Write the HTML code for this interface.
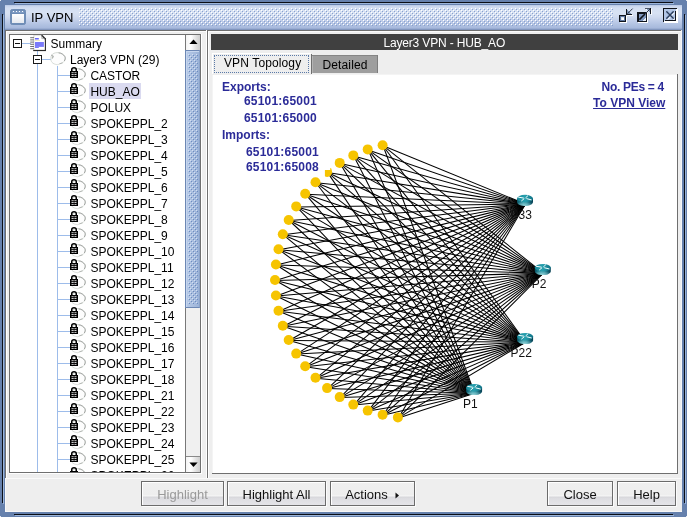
<!DOCTYPE html>
<html><head><meta charset="utf-8"><title>IP VPN</title>
<style>
html,body{margin:0;padding:0;}
body{will-change:transform;width:687px;height:517px;overflow:hidden;position:relative;background:#6681ad;font-family:"Liberation Sans",sans-serif;font-size:12px;}
body div, body svg{position:absolute;box-sizing:content-box;}
.t{white-space:nowrap;font-size:12px;line-height:16px;color:#000;}
.b{font-weight:bold;}
#title{background:linear-gradient(180deg,#b5c5e3 0px,#c7d4ec 1px,#d3def1 3px,#d8e2f3 8px,#cfdaef 12px,#bfcde9 16px,#b0c1e1 20px,#a7b9dc 23px,#8fa3c9 24px,#7489b3 25px);}
#thumb{box-sizing:border-box;border:1px solid #6c87b4;border-right-color:#8ba3c9;background:linear-gradient(90deg,#b6c9e7 0%,#acc1e1 40%,#a3b9dc 75%,#9ab2d7 100%);}
.btn{border:1px solid #6b6b6b;box-shadow:inset 1px 1px 0 #ffffff, 1px 1px 0 #fbfbfb;background:linear-gradient(180deg,#f0f0f0 0%,#eeeeee 55%,#f6f6f6 61%,#d6d6da 65%,#dddde1 72%,#e4e4e8 100%);text-align:center;line-height:25px;font-size:13px;white-space:nowrap;}
.btn span{position:static;}
</style></head>
<body>
<div style="left:0px;top:0px;width:687px;height:517px;background:#6681ad;"></div>
<div style="left:0px;top:0px;width:1px;height:1px;background:#e4e9f2;"></div>
<div style="left:686px;top:0px;width:1px;height:1px;background:#e4e9f2;"></div>
<div style="left:0px;top:516px;width:1px;height:1px;background:#e4e9f2;"></div>
<div style="left:686px;top:516px;width:1px;height:1px;background:#e4e9f2;"></div>
<div style="left:14px;top:2px;width:659px;height:1px;background:#0a0d14;"></div>
<div style="left:2px;top:14px;width:1px;height:489px;background:#0a0d14;"></div>
<div style="left:684px;top:14px;width:1px;height:489px;background:#0a0d14;"></div>
<div style="left:14px;top:514px;width:659px;height:1px;background:#0a0d14;"></div>
<div style="left:15px;top:3px;width:659px;height:1px;background:#9cb5d9;"></div>
<div style="left:3px;top:15px;width:1px;height:489px;background:#9cb5d9;"></div>
<div style="left:685px;top:15px;width:1px;height:489px;background:#9cb5d9;"></div>
<div style="left:15px;top:515px;width:659px;height:1px;background:#9cb5d9;"></div>
<div id="title" style="left:5px;top:5px;width:677px;height:25px;"></div>
<svg style="left:79px;top:8px" width="534" height="18" shape-rendering="crispEdges"><defs><pattern id="bp" width="4" height="4" patternUnits="userSpaceOnUse"><rect x="0" y="0" width="1" height="1" fill="#fff"/><rect x="1" y="1" width="1" height="1" fill="#88a1cf"/><rect x="2" y="2" width="1" height="1" fill="#fff"/><rect x="3" y="3" width="1" height="1" fill="#88a1cf"/></pattern></defs><rect width="534" height="18" fill="url(#bp)"/></svg>
<svg style="left:10px;top:9px" width="16" height="16" viewBox="0 0 16 16">
<defs><linearGradient id="wg" x1="0" y1="0" x2="0" y2="1"><stop offset="0" stop-color="#ffffff"/><stop offset="1" stop-color="#e4e8ef"/></linearGradient></defs>
<rect x="0.5" y="0.5" width="15" height="15" rx="1.8" fill="#6f8db6" stroke="#6f8db6"/>
<rect x="2" y="5" width="12" height="9" fill="url(#wg)"/>
<rect x="2" y="2" width="12" height="2" fill="#7f9cc4"/>
<rect x="3" y="2" width="1" height="1" fill="#fff"/><rect x="6" y="2" width="1" height="1" fill="#fff"/><rect x="9" y="2" width="1" height="1" fill="#fff"/><rect x="12" y="2" width="1" height="1" fill="#fff"/>
</svg>
<div class="t" style="left:31px;top:9px;font-size:13px;line-height:18px;">IP VPN</div>
<svg style="left:618px;top:7px" width="17" height="17" viewBox="0 0 17 17" shape-rendering="crispEdges">
<rect x="2" y="9" width="7" height="7" fill="#fff"/>
<rect x="1" y="8" width="7" height="7" fill="#10141c"/>
<rect x="2" y="9" width="5" height="5" fill="#5d769e"/>
<rect x="3" y="10" width="3" height="3" fill="#dfe6f2"/><rect x="3.5" y="10.5" width="2" height="2" fill="#fff"/>
<rect x="9" y="3" width="1" height="6" fill="#fff"/><rect x="9" y="8" width="6" height="1" fill="#fff"/>
<path d="M8 2 V8 H14 Z" fill="#7c94b8"/>
<rect x="8" y="2" width="1" height="6" fill="#10141c"/><rect x="8" y="7" width="6" height="1" fill="#10141c"/>
<g shape-rendering="auto">
<path d="M14.6 1.6 L9.4 6.8" stroke="#30384a" stroke-width="1" fill="none"/>
</g>
</svg>
<svg style="left:636px;top:7px" width="17" height="17" viewBox="0 0 17 17" shape-rendering="crispEdges">
<rect x="2" y="6" width="10" height="10" fill="#fff"/>
<rect x="1" y="5" width="10" height="10" fill="#10141c"/>
<rect x="3" y="7" width="7" height="7" fill="#7f98c0"/>
<path d="M10 10 V14 H6 Z" fill="#e8eef8"/>
<rect x="10" y="2" width="6" height="1" fill="#fff"/><rect x="15" y="2" width="1" height="6" fill="#fff"/>
<path d="M9 1 H15 V7 Z" fill="#7c94b8"/>
<rect x="9" y="1" width="6" height="1" fill="#4a5568"/><rect x="14" y="1" width="1" height="6" fill="#10141c"/>
<g shape-rendering="auto">
<path d="M3.4 12.6 L9 7" stroke="#10141c" stroke-width="1.6" fill="none"/>
<path d="M9 7 L14 2" stroke="#30384a" stroke-width="1" fill="none"/>
</g>
</svg>
<svg style="left:662px;top:7px" width="17" height="17" viewBox="0 0 17 17" shape-rendering="crispEdges">
<rect x="2" y="2" width="14" height="14" fill="#fff"/>
<rect x="1" y="1" width="14" height="14" fill="#10141c"/>
<rect x="2" y="2" width="12" height="12" fill="#b3c6e5"/>
<rect x="14" y="2" width="1" height="13" fill="#fff"/><rect x="2" y="14" width="13" height="1" fill="#fff"/>
<rect x="13" y="4" width="1" height="10" fill="#10141c"/><rect x="3" y="13" width="11" height="1" fill="#10141c"/>
<g shape-rendering="auto">
<path d="M4.5 4.5 L11.5 11.5 M11.5 4.5 L4.5 11.5" stroke="#fff" stroke-width="1.4" fill="none" transform="translate(0.9,0.9)"/>
<path d="M4.5 4.5 L11.5 11.5 M11.5 4.5 L4.5 11.5" stroke="#5d769e" stroke-width="2" fill="none"/>
<path d="M4.5 4.5 L11.5 11.5 M11.5 4.5 L4.5 11.5" stroke="#10141c" stroke-width="1" fill="none" stroke-dasharray="1.6 1.2"/>
</g>
</svg>
<div style="left:5px;top:30px;width:677px;height:482px;background:#eeeeee;"></div>
<div style="left:5px;top:479px;width:1px;height:33px;background:#f9f9f9;"></div>
<div style="left:5px;top:511px;width:677px;height:1px;background:#f7f7f7;"></div>
<div style="left:5px;top:30px;width:201px;height:1px;background:#6f6f6f;"></div>
<div style="left:206px;top:30px;width:1px;height:448px;background:#ffffff;"></div>
<div style="left:207px;top:30px;width:474px;height:1px;background:#6f6f6f;"></div>
<div style="left:5px;top:30px;width:1px;height:448px;background:#6f6f6f;"></div>
<div style="left:6px;top:31px;width:1px;height:447px;background:#ffffff;"></div>
<div style="left:6px;top:31px;width:200px;height:1px;background:#fbfbfb;"></div>
<div style="left:5px;top:478px;width:677px;height:1px;background:#fafafa;"></div>
<div style="left:681px;top:31px;width:1px;height:448px;background:#f8f8f8;"></div>
<div style="left:207px;top:30px;width:1px;height:448px;background:#6f6f6f;"></div>
<div style="left:208px;top:31px;width:1px;height:447px;background:#ffffff;"></div>
<div style="left:208px;top:31px;width:473px;height:1px;background:#fbfbfb;"></div>
<div style="left:9px;top:34px;width:192px;height:439px;background:#6f6f6f;"></div>
<div style="left:201px;top:34px;width:1px;height:440px;background:#ffffff;"></div>
<div style="left:9px;top:473px;width:193px;height:1px;background:#ffffff;"></div>
<div id="tree" style="left:10px;top:35px;width:175px;height:437px;background:#fff;overflow:hidden;">
<div style="left:27px;top:16px;width:1px;height:4px;background:#9dbcea;"></div>
<div style="left:27px;top:29px;width:1px;height:420px;background:#9dbcea;"></div>
<div style="left:47px;top:31px;width:1px;height:420px;background:#9dbcea;"></div>
<div style="left:12px;top:8px;width:9px;height:1px;background:#9dbcea;"></div>
<div style="left:32px;top:24px;width:9px;height:1px;background:#9dbcea;"></div>
<div style="left:3px;top:4px;width:7px;height:7px;border:1px solid #1a1a1a;background:#fff;"></div><div style="left:5px;top:8px;width:5px;height:1px;background:#111;"></div>
<div style="left:23px;top:20px;width:7px;height:7px;border:1px solid #1a1a1a;background:#fff;"></div><div style="left:25px;top:24px;width:5px;height:1px;background:#111;"></div>
<svg style="left:20px;top:0px" width="17" height="17" viewBox="0 0 17 17">
<path d="M3.6 0 H12 L15.6 3.6 V15.6 H3.6 Z" fill="#fff"/>
<path d="M3.9 0.3 V15.3" stroke="#c9c9c9" stroke-width="0.8" fill="none"/>
<path d="M3.6 0.3 H12" stroke="#c9c9c9" stroke-width="0.6" fill="none"/>
<path d="M3.2 15.5 H15.9" stroke="#2a2a2a" stroke-width="1.2" fill="none"/>
<path d="M15.4 3.2 V16" stroke="#2a2a2a" stroke-width="1.1" fill="none"/>
<path d="M11.6 0.2 L15.6 4.2" stroke="#2a2a2a" stroke-width="1.5" fill="none"/>
<path d="M11.8 1 V3.6 H14.6" stroke="#999" stroke-width="0.7" fill="none"/>
<g stroke="#6e6e6e" stroke-width="1"><path d="M0.2 2.7H4M0.2 4.9H4M0.2 7.1H4M0.2 9.3H4M0.2 11.5H4M0.2 13.7H4"/></g>
<rect x="5" y="3" width="3.8" height="1.5" fill="#6666f6"/>
<rect x="5" y="5.3" width="5" height="0.6" fill="#e6dc96"/>
<rect x="5" y="7" width="8.9" height="4.9" fill="#7a7afa"/>
<rect x="5" y="11.9" width="3.8" height="1.1" fill="#7a7afa"/>
</svg>
<div class="t" style="left:40.6px;top:1px;">Summary</div>
<svg style="left:40px;top:16px" width="17" height="16" viewBox="0 0 17 16"><path d="M1.5 4.5 C2.5 2.5 5 1.5 8 1.6 C11 1.6 13.5 3.2 15 5.5 C15.8 7 15.2 9 14 10.5 C13 12 11 12.6 9.5 12.8 C8.5 13.5 7.5 14 6.8 13.6 C5 13.4 3 12.6 2 11.4 C1 10 0.6 8.5 1 7 C0.8 6 1 5.2 1.5 4.5 Z" fill="#fdfdfd" stroke="#d3d8d3" stroke-width="0.9"/><path d="M8.6 1.9 C11.3 2 13.6 3.6 14.8 5.6 C15.6 7 15.2 8.6 14.3 10" fill="none" stroke="#9a9c9a" stroke-width="0.9"/><path d="M1.3 4 L3.2 5.4 L2.2 7.6" fill="none" stroke="#b0b4b0" stroke-width="1.3"/><path d="M9.5 12.8 L12.5 11.8" fill="none" stroke="#a8aca8" stroke-width="0.8"/></svg>
<div class="t" style="left:60px;top:17px;">Layer3 VPN (29)</div>
<div style="left:48px;top:40px;width:12px;height:1px;background:#9dbcea;"></div>
<svg style="left:60px;top:32px" width="18" height="16" viewBox="0 0 18 16"><path d="M1.5 4.5 C2.5 2.5 5 1.5 8 1.6 C11 1.6 13.5 3.2 15 5.5 C15.8 7 15.2 9 14 10.5 C13 12 11 12.6 9.5 12.8 C8.5 13.5 7.5 14 6.8 13.6 C5 13.4 3 12.6 2 11.4 C1 10 0.6 8.5 1 7 C0.8 6 1 5.2 1.5 4.5 Z" fill="#fdfdfd" stroke="#d3d8d3" stroke-width="0.9"/><path d="M8.6 1.9 C11.3 2 13.6 3.6 14.8 5.6 C15.6 7 15.2 8.6 14.3 10" fill="none" stroke="#9a9c9a" stroke-width="0.9"/><path d="M1.3 4 L3.2 5.4 L2.2 7.6" fill="none" stroke="#b0b4b0" stroke-width="1.3"/><path d="M9.5 12.8 L12.5 11.8" fill="none" stroke="#a8aca8" stroke-width="0.8"/><path d="M1.75 4.5 V2.6 Q1.75 0.75 4 0.75 Q6.25 0.75 6.25 2.6 V4.5" fill="none" stroke="#000" stroke-width="1.5"/><rect x="0" y="4" width="8" height="7" fill="#000"/><rect x="1.5" y="5.35" width="5" height="0.8" fill="#fff"/><rect x="1.5" y="7.15" width="5" height="0.8" fill="#fff"/><rect x="1.5" y="8.95" width="5" height="0.8" fill="#f4f4f4"/><rect x="3.7" y="5" width="0.7" height="5" fill="#000"/></svg>
<div class="t" style="left:80.4px;top:33px;">CASTOR</div>
<div style="left:48px;top:56px;width:12px;height:1px;background:#9dbcea;"></div>
<svg style="left:60px;top:48px" width="18" height="16" viewBox="0 0 18 16"><path d="M1.5 4.5 C2.5 2.5 5 1.5 8 1.6 C11 1.6 13.5 3.2 15 5.5 C15.8 7 15.2 9 14 10.5 C13 12 11 12.6 9.5 12.8 C8.5 13.5 7.5 14 6.8 13.6 C5 13.4 3 12.6 2 11.4 C1 10 0.6 8.5 1 7 C0.8 6 1 5.2 1.5 4.5 Z" fill="#fdfdfd" stroke="#d3d8d3" stroke-width="0.9"/><path d="M8.6 1.9 C11.3 2 13.6 3.6 14.8 5.6 C15.6 7 15.2 8.6 14.3 10" fill="none" stroke="#9a9c9a" stroke-width="0.9"/><path d="M1.3 4 L3.2 5.4 L2.2 7.6" fill="none" stroke="#b0b4b0" stroke-width="1.3"/><path d="M9.5 12.8 L12.5 11.8" fill="none" stroke="#a8aca8" stroke-width="0.8"/><path d="M1.75 4.5 V2.6 Q1.75 0.75 4 0.75 Q6.25 0.75 6.25 2.6 V4.5" fill="none" stroke="#000" stroke-width="1.5"/><rect x="0" y="4" width="8" height="7" fill="#000"/><rect x="1.5" y="5.35" width="5" height="0.8" fill="#fff"/><rect x="1.5" y="7.15" width="5" height="0.8" fill="#fff"/><rect x="1.5" y="8.95" width="5" height="0.8" fill="#f4f4f4"/><rect x="3.7" y="5" width="0.7" height="5" fill="#000"/></svg>
<div style="left:79px;top:48px;width:52px;height:16px;background:#dadaf0;"></div>
<div class="t" style="left:80.4px;top:49px;">HUB_AO</div>
<div style="left:48px;top:72px;width:12px;height:1px;background:#9dbcea;"></div>
<svg style="left:60px;top:64px" width="18" height="16" viewBox="0 0 18 16"><path d="M1.5 4.5 C2.5 2.5 5 1.5 8 1.6 C11 1.6 13.5 3.2 15 5.5 C15.8 7 15.2 9 14 10.5 C13 12 11 12.6 9.5 12.8 C8.5 13.5 7.5 14 6.8 13.6 C5 13.4 3 12.6 2 11.4 C1 10 0.6 8.5 1 7 C0.8 6 1 5.2 1.5 4.5 Z" fill="#fdfdfd" stroke="#d3d8d3" stroke-width="0.9"/><path d="M8.6 1.9 C11.3 2 13.6 3.6 14.8 5.6 C15.6 7 15.2 8.6 14.3 10" fill="none" stroke="#9a9c9a" stroke-width="0.9"/><path d="M1.3 4 L3.2 5.4 L2.2 7.6" fill="none" stroke="#b0b4b0" stroke-width="1.3"/><path d="M9.5 12.8 L12.5 11.8" fill="none" stroke="#a8aca8" stroke-width="0.8"/><path d="M1.75 4.5 V2.6 Q1.75 0.75 4 0.75 Q6.25 0.75 6.25 2.6 V4.5" fill="none" stroke="#000" stroke-width="1.5"/><rect x="0" y="4" width="8" height="7" fill="#000"/><rect x="1.5" y="5.35" width="5" height="0.8" fill="#fff"/><rect x="1.5" y="7.15" width="5" height="0.8" fill="#fff"/><rect x="1.5" y="8.95" width="5" height="0.8" fill="#f4f4f4"/><rect x="3.7" y="5" width="0.7" height="5" fill="#000"/></svg>
<div class="t" style="left:80.4px;top:65px;">POLUX</div>
<div style="left:48px;top:88px;width:12px;height:1px;background:#9dbcea;"></div>
<svg style="left:60px;top:80px" width="18" height="16" viewBox="0 0 18 16"><path d="M1.5 4.5 C2.5 2.5 5 1.5 8 1.6 C11 1.6 13.5 3.2 15 5.5 C15.8 7 15.2 9 14 10.5 C13 12 11 12.6 9.5 12.8 C8.5 13.5 7.5 14 6.8 13.6 C5 13.4 3 12.6 2 11.4 C1 10 0.6 8.5 1 7 C0.8 6 1 5.2 1.5 4.5 Z" fill="#fdfdfd" stroke="#d3d8d3" stroke-width="0.9"/><path d="M8.6 1.9 C11.3 2 13.6 3.6 14.8 5.6 C15.6 7 15.2 8.6 14.3 10" fill="none" stroke="#9a9c9a" stroke-width="0.9"/><path d="M1.3 4 L3.2 5.4 L2.2 7.6" fill="none" stroke="#b0b4b0" stroke-width="1.3"/><path d="M9.5 12.8 L12.5 11.8" fill="none" stroke="#a8aca8" stroke-width="0.8"/><path d="M1.75 4.5 V2.6 Q1.75 0.75 4 0.75 Q6.25 0.75 6.25 2.6 V4.5" fill="none" stroke="#000" stroke-width="1.5"/><rect x="0" y="4" width="8" height="7" fill="#000"/><rect x="1.5" y="5.35" width="5" height="0.8" fill="#fff"/><rect x="1.5" y="7.15" width="5" height="0.8" fill="#fff"/><rect x="1.5" y="8.95" width="5" height="0.8" fill="#f4f4f4"/><rect x="3.7" y="5" width="0.7" height="5" fill="#000"/></svg>
<div class="t" style="left:80.4px;top:81px;">SPOKEPPL_2</div>
<div style="left:48px;top:104px;width:12px;height:1px;background:#9dbcea;"></div>
<svg style="left:60px;top:96px" width="18" height="16" viewBox="0 0 18 16"><path d="M1.5 4.5 C2.5 2.5 5 1.5 8 1.6 C11 1.6 13.5 3.2 15 5.5 C15.8 7 15.2 9 14 10.5 C13 12 11 12.6 9.5 12.8 C8.5 13.5 7.5 14 6.8 13.6 C5 13.4 3 12.6 2 11.4 C1 10 0.6 8.5 1 7 C0.8 6 1 5.2 1.5 4.5 Z" fill="#fdfdfd" stroke="#d3d8d3" stroke-width="0.9"/><path d="M8.6 1.9 C11.3 2 13.6 3.6 14.8 5.6 C15.6 7 15.2 8.6 14.3 10" fill="none" stroke="#9a9c9a" stroke-width="0.9"/><path d="M1.3 4 L3.2 5.4 L2.2 7.6" fill="none" stroke="#b0b4b0" stroke-width="1.3"/><path d="M9.5 12.8 L12.5 11.8" fill="none" stroke="#a8aca8" stroke-width="0.8"/><path d="M1.75 4.5 V2.6 Q1.75 0.75 4 0.75 Q6.25 0.75 6.25 2.6 V4.5" fill="none" stroke="#000" stroke-width="1.5"/><rect x="0" y="4" width="8" height="7" fill="#000"/><rect x="1.5" y="5.35" width="5" height="0.8" fill="#fff"/><rect x="1.5" y="7.15" width="5" height="0.8" fill="#fff"/><rect x="1.5" y="8.95" width="5" height="0.8" fill="#f4f4f4"/><rect x="3.7" y="5" width="0.7" height="5" fill="#000"/></svg>
<div class="t" style="left:80.4px;top:97px;">SPOKEPPL_3</div>
<div style="left:48px;top:120px;width:12px;height:1px;background:#9dbcea;"></div>
<svg style="left:60px;top:112px" width="18" height="16" viewBox="0 0 18 16"><path d="M1.5 4.5 C2.5 2.5 5 1.5 8 1.6 C11 1.6 13.5 3.2 15 5.5 C15.8 7 15.2 9 14 10.5 C13 12 11 12.6 9.5 12.8 C8.5 13.5 7.5 14 6.8 13.6 C5 13.4 3 12.6 2 11.4 C1 10 0.6 8.5 1 7 C0.8 6 1 5.2 1.5 4.5 Z" fill="#fdfdfd" stroke="#d3d8d3" stroke-width="0.9"/><path d="M8.6 1.9 C11.3 2 13.6 3.6 14.8 5.6 C15.6 7 15.2 8.6 14.3 10" fill="none" stroke="#9a9c9a" stroke-width="0.9"/><path d="M1.3 4 L3.2 5.4 L2.2 7.6" fill="none" stroke="#b0b4b0" stroke-width="1.3"/><path d="M9.5 12.8 L12.5 11.8" fill="none" stroke="#a8aca8" stroke-width="0.8"/><path d="M1.75 4.5 V2.6 Q1.75 0.75 4 0.75 Q6.25 0.75 6.25 2.6 V4.5" fill="none" stroke="#000" stroke-width="1.5"/><rect x="0" y="4" width="8" height="7" fill="#000"/><rect x="1.5" y="5.35" width="5" height="0.8" fill="#fff"/><rect x="1.5" y="7.15" width="5" height="0.8" fill="#fff"/><rect x="1.5" y="8.95" width="5" height="0.8" fill="#f4f4f4"/><rect x="3.7" y="5" width="0.7" height="5" fill="#000"/></svg>
<div class="t" style="left:80.4px;top:113px;">SPOKEPPL_4</div>
<div style="left:48px;top:136px;width:12px;height:1px;background:#9dbcea;"></div>
<svg style="left:60px;top:128px" width="18" height="16" viewBox="0 0 18 16"><path d="M1.5 4.5 C2.5 2.5 5 1.5 8 1.6 C11 1.6 13.5 3.2 15 5.5 C15.8 7 15.2 9 14 10.5 C13 12 11 12.6 9.5 12.8 C8.5 13.5 7.5 14 6.8 13.6 C5 13.4 3 12.6 2 11.4 C1 10 0.6 8.5 1 7 C0.8 6 1 5.2 1.5 4.5 Z" fill="#fdfdfd" stroke="#d3d8d3" stroke-width="0.9"/><path d="M8.6 1.9 C11.3 2 13.6 3.6 14.8 5.6 C15.6 7 15.2 8.6 14.3 10" fill="none" stroke="#9a9c9a" stroke-width="0.9"/><path d="M1.3 4 L3.2 5.4 L2.2 7.6" fill="none" stroke="#b0b4b0" stroke-width="1.3"/><path d="M9.5 12.8 L12.5 11.8" fill="none" stroke="#a8aca8" stroke-width="0.8"/><path d="M1.75 4.5 V2.6 Q1.75 0.75 4 0.75 Q6.25 0.75 6.25 2.6 V4.5" fill="none" stroke="#000" stroke-width="1.5"/><rect x="0" y="4" width="8" height="7" fill="#000"/><rect x="1.5" y="5.35" width="5" height="0.8" fill="#fff"/><rect x="1.5" y="7.15" width="5" height="0.8" fill="#fff"/><rect x="1.5" y="8.95" width="5" height="0.8" fill="#f4f4f4"/><rect x="3.7" y="5" width="0.7" height="5" fill="#000"/></svg>
<div class="t" style="left:80.4px;top:129px;">SPOKEPPL_5</div>
<div style="left:48px;top:152px;width:12px;height:1px;background:#9dbcea;"></div>
<svg style="left:60px;top:144px" width="18" height="16" viewBox="0 0 18 16"><path d="M1.5 4.5 C2.5 2.5 5 1.5 8 1.6 C11 1.6 13.5 3.2 15 5.5 C15.8 7 15.2 9 14 10.5 C13 12 11 12.6 9.5 12.8 C8.5 13.5 7.5 14 6.8 13.6 C5 13.4 3 12.6 2 11.4 C1 10 0.6 8.5 1 7 C0.8 6 1 5.2 1.5 4.5 Z" fill="#fdfdfd" stroke="#d3d8d3" stroke-width="0.9"/><path d="M8.6 1.9 C11.3 2 13.6 3.6 14.8 5.6 C15.6 7 15.2 8.6 14.3 10" fill="none" stroke="#9a9c9a" stroke-width="0.9"/><path d="M1.3 4 L3.2 5.4 L2.2 7.6" fill="none" stroke="#b0b4b0" stroke-width="1.3"/><path d="M9.5 12.8 L12.5 11.8" fill="none" stroke="#a8aca8" stroke-width="0.8"/><path d="M1.75 4.5 V2.6 Q1.75 0.75 4 0.75 Q6.25 0.75 6.25 2.6 V4.5" fill="none" stroke="#000" stroke-width="1.5"/><rect x="0" y="4" width="8" height="7" fill="#000"/><rect x="1.5" y="5.35" width="5" height="0.8" fill="#fff"/><rect x="1.5" y="7.15" width="5" height="0.8" fill="#fff"/><rect x="1.5" y="8.95" width="5" height="0.8" fill="#f4f4f4"/><rect x="3.7" y="5" width="0.7" height="5" fill="#000"/></svg>
<div class="t" style="left:80.4px;top:145px;">SPOKEPPL_6</div>
<div style="left:48px;top:168px;width:12px;height:1px;background:#9dbcea;"></div>
<svg style="left:60px;top:160px" width="18" height="16" viewBox="0 0 18 16"><path d="M1.5 4.5 C2.5 2.5 5 1.5 8 1.6 C11 1.6 13.5 3.2 15 5.5 C15.8 7 15.2 9 14 10.5 C13 12 11 12.6 9.5 12.8 C8.5 13.5 7.5 14 6.8 13.6 C5 13.4 3 12.6 2 11.4 C1 10 0.6 8.5 1 7 C0.8 6 1 5.2 1.5 4.5 Z" fill="#fdfdfd" stroke="#d3d8d3" stroke-width="0.9"/><path d="M8.6 1.9 C11.3 2 13.6 3.6 14.8 5.6 C15.6 7 15.2 8.6 14.3 10" fill="none" stroke="#9a9c9a" stroke-width="0.9"/><path d="M1.3 4 L3.2 5.4 L2.2 7.6" fill="none" stroke="#b0b4b0" stroke-width="1.3"/><path d="M9.5 12.8 L12.5 11.8" fill="none" stroke="#a8aca8" stroke-width="0.8"/><path d="M1.75 4.5 V2.6 Q1.75 0.75 4 0.75 Q6.25 0.75 6.25 2.6 V4.5" fill="none" stroke="#000" stroke-width="1.5"/><rect x="0" y="4" width="8" height="7" fill="#000"/><rect x="1.5" y="5.35" width="5" height="0.8" fill="#fff"/><rect x="1.5" y="7.15" width="5" height="0.8" fill="#fff"/><rect x="1.5" y="8.95" width="5" height="0.8" fill="#f4f4f4"/><rect x="3.7" y="5" width="0.7" height="5" fill="#000"/></svg>
<div class="t" style="left:80.4px;top:161px;">SPOKEPPL_7</div>
<div style="left:48px;top:184px;width:12px;height:1px;background:#9dbcea;"></div>
<svg style="left:60px;top:176px" width="18" height="16" viewBox="0 0 18 16"><path d="M1.5 4.5 C2.5 2.5 5 1.5 8 1.6 C11 1.6 13.5 3.2 15 5.5 C15.8 7 15.2 9 14 10.5 C13 12 11 12.6 9.5 12.8 C8.5 13.5 7.5 14 6.8 13.6 C5 13.4 3 12.6 2 11.4 C1 10 0.6 8.5 1 7 C0.8 6 1 5.2 1.5 4.5 Z" fill="#fdfdfd" stroke="#d3d8d3" stroke-width="0.9"/><path d="M8.6 1.9 C11.3 2 13.6 3.6 14.8 5.6 C15.6 7 15.2 8.6 14.3 10" fill="none" stroke="#9a9c9a" stroke-width="0.9"/><path d="M1.3 4 L3.2 5.4 L2.2 7.6" fill="none" stroke="#b0b4b0" stroke-width="1.3"/><path d="M9.5 12.8 L12.5 11.8" fill="none" stroke="#a8aca8" stroke-width="0.8"/><path d="M1.75 4.5 V2.6 Q1.75 0.75 4 0.75 Q6.25 0.75 6.25 2.6 V4.5" fill="none" stroke="#000" stroke-width="1.5"/><rect x="0" y="4" width="8" height="7" fill="#000"/><rect x="1.5" y="5.35" width="5" height="0.8" fill="#fff"/><rect x="1.5" y="7.15" width="5" height="0.8" fill="#fff"/><rect x="1.5" y="8.95" width="5" height="0.8" fill="#f4f4f4"/><rect x="3.7" y="5" width="0.7" height="5" fill="#000"/></svg>
<div class="t" style="left:80.4px;top:177px;">SPOKEPPL_8</div>
<div style="left:48px;top:200px;width:12px;height:1px;background:#9dbcea;"></div>
<svg style="left:60px;top:192px" width="18" height="16" viewBox="0 0 18 16"><path d="M1.5 4.5 C2.5 2.5 5 1.5 8 1.6 C11 1.6 13.5 3.2 15 5.5 C15.8 7 15.2 9 14 10.5 C13 12 11 12.6 9.5 12.8 C8.5 13.5 7.5 14 6.8 13.6 C5 13.4 3 12.6 2 11.4 C1 10 0.6 8.5 1 7 C0.8 6 1 5.2 1.5 4.5 Z" fill="#fdfdfd" stroke="#d3d8d3" stroke-width="0.9"/><path d="M8.6 1.9 C11.3 2 13.6 3.6 14.8 5.6 C15.6 7 15.2 8.6 14.3 10" fill="none" stroke="#9a9c9a" stroke-width="0.9"/><path d="M1.3 4 L3.2 5.4 L2.2 7.6" fill="none" stroke="#b0b4b0" stroke-width="1.3"/><path d="M9.5 12.8 L12.5 11.8" fill="none" stroke="#a8aca8" stroke-width="0.8"/><path d="M1.75 4.5 V2.6 Q1.75 0.75 4 0.75 Q6.25 0.75 6.25 2.6 V4.5" fill="none" stroke="#000" stroke-width="1.5"/><rect x="0" y="4" width="8" height="7" fill="#000"/><rect x="1.5" y="5.35" width="5" height="0.8" fill="#fff"/><rect x="1.5" y="7.15" width="5" height="0.8" fill="#fff"/><rect x="1.5" y="8.95" width="5" height="0.8" fill="#f4f4f4"/><rect x="3.7" y="5" width="0.7" height="5" fill="#000"/></svg>
<div class="t" style="left:80.4px;top:193px;">SPOKEPPL_9</div>
<div style="left:48px;top:216px;width:12px;height:1px;background:#9dbcea;"></div>
<svg style="left:60px;top:208px" width="18" height="16" viewBox="0 0 18 16"><path d="M1.5 4.5 C2.5 2.5 5 1.5 8 1.6 C11 1.6 13.5 3.2 15 5.5 C15.8 7 15.2 9 14 10.5 C13 12 11 12.6 9.5 12.8 C8.5 13.5 7.5 14 6.8 13.6 C5 13.4 3 12.6 2 11.4 C1 10 0.6 8.5 1 7 C0.8 6 1 5.2 1.5 4.5 Z" fill="#fdfdfd" stroke="#d3d8d3" stroke-width="0.9"/><path d="M8.6 1.9 C11.3 2 13.6 3.6 14.8 5.6 C15.6 7 15.2 8.6 14.3 10" fill="none" stroke="#9a9c9a" stroke-width="0.9"/><path d="M1.3 4 L3.2 5.4 L2.2 7.6" fill="none" stroke="#b0b4b0" stroke-width="1.3"/><path d="M9.5 12.8 L12.5 11.8" fill="none" stroke="#a8aca8" stroke-width="0.8"/><path d="M1.75 4.5 V2.6 Q1.75 0.75 4 0.75 Q6.25 0.75 6.25 2.6 V4.5" fill="none" stroke="#000" stroke-width="1.5"/><rect x="0" y="4" width="8" height="7" fill="#000"/><rect x="1.5" y="5.35" width="5" height="0.8" fill="#fff"/><rect x="1.5" y="7.15" width="5" height="0.8" fill="#fff"/><rect x="1.5" y="8.95" width="5" height="0.8" fill="#f4f4f4"/><rect x="3.7" y="5" width="0.7" height="5" fill="#000"/></svg>
<div class="t" style="left:80.4px;top:209px;">SPOKEPPL_10</div>
<div style="left:48px;top:232px;width:12px;height:1px;background:#9dbcea;"></div>
<svg style="left:60px;top:224px" width="18" height="16" viewBox="0 0 18 16"><path d="M1.5 4.5 C2.5 2.5 5 1.5 8 1.6 C11 1.6 13.5 3.2 15 5.5 C15.8 7 15.2 9 14 10.5 C13 12 11 12.6 9.5 12.8 C8.5 13.5 7.5 14 6.8 13.6 C5 13.4 3 12.6 2 11.4 C1 10 0.6 8.5 1 7 C0.8 6 1 5.2 1.5 4.5 Z" fill="#fdfdfd" stroke="#d3d8d3" stroke-width="0.9"/><path d="M8.6 1.9 C11.3 2 13.6 3.6 14.8 5.6 C15.6 7 15.2 8.6 14.3 10" fill="none" stroke="#9a9c9a" stroke-width="0.9"/><path d="M1.3 4 L3.2 5.4 L2.2 7.6" fill="none" stroke="#b0b4b0" stroke-width="1.3"/><path d="M9.5 12.8 L12.5 11.8" fill="none" stroke="#a8aca8" stroke-width="0.8"/><path d="M1.75 4.5 V2.6 Q1.75 0.75 4 0.75 Q6.25 0.75 6.25 2.6 V4.5" fill="none" stroke="#000" stroke-width="1.5"/><rect x="0" y="4" width="8" height="7" fill="#000"/><rect x="1.5" y="5.35" width="5" height="0.8" fill="#fff"/><rect x="1.5" y="7.15" width="5" height="0.8" fill="#fff"/><rect x="1.5" y="8.95" width="5" height="0.8" fill="#f4f4f4"/><rect x="3.7" y="5" width="0.7" height="5" fill="#000"/></svg>
<div class="t" style="left:80.4px;top:225px;">SPOKEPPL_11</div>
<div style="left:48px;top:248px;width:12px;height:1px;background:#9dbcea;"></div>
<svg style="left:60px;top:240px" width="18" height="16" viewBox="0 0 18 16"><path d="M1.5 4.5 C2.5 2.5 5 1.5 8 1.6 C11 1.6 13.5 3.2 15 5.5 C15.8 7 15.2 9 14 10.5 C13 12 11 12.6 9.5 12.8 C8.5 13.5 7.5 14 6.8 13.6 C5 13.4 3 12.6 2 11.4 C1 10 0.6 8.5 1 7 C0.8 6 1 5.2 1.5 4.5 Z" fill="#fdfdfd" stroke="#d3d8d3" stroke-width="0.9"/><path d="M8.6 1.9 C11.3 2 13.6 3.6 14.8 5.6 C15.6 7 15.2 8.6 14.3 10" fill="none" stroke="#9a9c9a" stroke-width="0.9"/><path d="M1.3 4 L3.2 5.4 L2.2 7.6" fill="none" stroke="#b0b4b0" stroke-width="1.3"/><path d="M9.5 12.8 L12.5 11.8" fill="none" stroke="#a8aca8" stroke-width="0.8"/><path d="M1.75 4.5 V2.6 Q1.75 0.75 4 0.75 Q6.25 0.75 6.25 2.6 V4.5" fill="none" stroke="#000" stroke-width="1.5"/><rect x="0" y="4" width="8" height="7" fill="#000"/><rect x="1.5" y="5.35" width="5" height="0.8" fill="#fff"/><rect x="1.5" y="7.15" width="5" height="0.8" fill="#fff"/><rect x="1.5" y="8.95" width="5" height="0.8" fill="#f4f4f4"/><rect x="3.7" y="5" width="0.7" height="5" fill="#000"/></svg>
<div class="t" style="left:80.4px;top:241px;">SPOKEPPL_12</div>
<div style="left:48px;top:264px;width:12px;height:1px;background:#9dbcea;"></div>
<svg style="left:60px;top:256px" width="18" height="16" viewBox="0 0 18 16"><path d="M1.5 4.5 C2.5 2.5 5 1.5 8 1.6 C11 1.6 13.5 3.2 15 5.5 C15.8 7 15.2 9 14 10.5 C13 12 11 12.6 9.5 12.8 C8.5 13.5 7.5 14 6.8 13.6 C5 13.4 3 12.6 2 11.4 C1 10 0.6 8.5 1 7 C0.8 6 1 5.2 1.5 4.5 Z" fill="#fdfdfd" stroke="#d3d8d3" stroke-width="0.9"/><path d="M8.6 1.9 C11.3 2 13.6 3.6 14.8 5.6 C15.6 7 15.2 8.6 14.3 10" fill="none" stroke="#9a9c9a" stroke-width="0.9"/><path d="M1.3 4 L3.2 5.4 L2.2 7.6" fill="none" stroke="#b0b4b0" stroke-width="1.3"/><path d="M9.5 12.8 L12.5 11.8" fill="none" stroke="#a8aca8" stroke-width="0.8"/><path d="M1.75 4.5 V2.6 Q1.75 0.75 4 0.75 Q6.25 0.75 6.25 2.6 V4.5" fill="none" stroke="#000" stroke-width="1.5"/><rect x="0" y="4" width="8" height="7" fill="#000"/><rect x="1.5" y="5.35" width="5" height="0.8" fill="#fff"/><rect x="1.5" y="7.15" width="5" height="0.8" fill="#fff"/><rect x="1.5" y="8.95" width="5" height="0.8" fill="#f4f4f4"/><rect x="3.7" y="5" width="0.7" height="5" fill="#000"/></svg>
<div class="t" style="left:80.4px;top:257px;">SPOKEPPL_13</div>
<div style="left:48px;top:280px;width:12px;height:1px;background:#9dbcea;"></div>
<svg style="left:60px;top:272px" width="18" height="16" viewBox="0 0 18 16"><path d="M1.5 4.5 C2.5 2.5 5 1.5 8 1.6 C11 1.6 13.5 3.2 15 5.5 C15.8 7 15.2 9 14 10.5 C13 12 11 12.6 9.5 12.8 C8.5 13.5 7.5 14 6.8 13.6 C5 13.4 3 12.6 2 11.4 C1 10 0.6 8.5 1 7 C0.8 6 1 5.2 1.5 4.5 Z" fill="#fdfdfd" stroke="#d3d8d3" stroke-width="0.9"/><path d="M8.6 1.9 C11.3 2 13.6 3.6 14.8 5.6 C15.6 7 15.2 8.6 14.3 10" fill="none" stroke="#9a9c9a" stroke-width="0.9"/><path d="M1.3 4 L3.2 5.4 L2.2 7.6" fill="none" stroke="#b0b4b0" stroke-width="1.3"/><path d="M9.5 12.8 L12.5 11.8" fill="none" stroke="#a8aca8" stroke-width="0.8"/><path d="M1.75 4.5 V2.6 Q1.75 0.75 4 0.75 Q6.25 0.75 6.25 2.6 V4.5" fill="none" stroke="#000" stroke-width="1.5"/><rect x="0" y="4" width="8" height="7" fill="#000"/><rect x="1.5" y="5.35" width="5" height="0.8" fill="#fff"/><rect x="1.5" y="7.15" width="5" height="0.8" fill="#fff"/><rect x="1.5" y="8.95" width="5" height="0.8" fill="#f4f4f4"/><rect x="3.7" y="5" width="0.7" height="5" fill="#000"/></svg>
<div class="t" style="left:80.4px;top:273px;">SPOKEPPL_14</div>
<div style="left:48px;top:296px;width:12px;height:1px;background:#9dbcea;"></div>
<svg style="left:60px;top:288px" width="18" height="16" viewBox="0 0 18 16"><path d="M1.5 4.5 C2.5 2.5 5 1.5 8 1.6 C11 1.6 13.5 3.2 15 5.5 C15.8 7 15.2 9 14 10.5 C13 12 11 12.6 9.5 12.8 C8.5 13.5 7.5 14 6.8 13.6 C5 13.4 3 12.6 2 11.4 C1 10 0.6 8.5 1 7 C0.8 6 1 5.2 1.5 4.5 Z" fill="#fdfdfd" stroke="#d3d8d3" stroke-width="0.9"/><path d="M8.6 1.9 C11.3 2 13.6 3.6 14.8 5.6 C15.6 7 15.2 8.6 14.3 10" fill="none" stroke="#9a9c9a" stroke-width="0.9"/><path d="M1.3 4 L3.2 5.4 L2.2 7.6" fill="none" stroke="#b0b4b0" stroke-width="1.3"/><path d="M9.5 12.8 L12.5 11.8" fill="none" stroke="#a8aca8" stroke-width="0.8"/><path d="M1.75 4.5 V2.6 Q1.75 0.75 4 0.75 Q6.25 0.75 6.25 2.6 V4.5" fill="none" stroke="#000" stroke-width="1.5"/><rect x="0" y="4" width="8" height="7" fill="#000"/><rect x="1.5" y="5.35" width="5" height="0.8" fill="#fff"/><rect x="1.5" y="7.15" width="5" height="0.8" fill="#fff"/><rect x="1.5" y="8.95" width="5" height="0.8" fill="#f4f4f4"/><rect x="3.7" y="5" width="0.7" height="5" fill="#000"/></svg>
<div class="t" style="left:80.4px;top:289px;">SPOKEPPL_15</div>
<div style="left:48px;top:312px;width:12px;height:1px;background:#9dbcea;"></div>
<svg style="left:60px;top:304px" width="18" height="16" viewBox="0 0 18 16"><path d="M1.5 4.5 C2.5 2.5 5 1.5 8 1.6 C11 1.6 13.5 3.2 15 5.5 C15.8 7 15.2 9 14 10.5 C13 12 11 12.6 9.5 12.8 C8.5 13.5 7.5 14 6.8 13.6 C5 13.4 3 12.6 2 11.4 C1 10 0.6 8.5 1 7 C0.8 6 1 5.2 1.5 4.5 Z" fill="#fdfdfd" stroke="#d3d8d3" stroke-width="0.9"/><path d="M8.6 1.9 C11.3 2 13.6 3.6 14.8 5.6 C15.6 7 15.2 8.6 14.3 10" fill="none" stroke="#9a9c9a" stroke-width="0.9"/><path d="M1.3 4 L3.2 5.4 L2.2 7.6" fill="none" stroke="#b0b4b0" stroke-width="1.3"/><path d="M9.5 12.8 L12.5 11.8" fill="none" stroke="#a8aca8" stroke-width="0.8"/><path d="M1.75 4.5 V2.6 Q1.75 0.75 4 0.75 Q6.25 0.75 6.25 2.6 V4.5" fill="none" stroke="#000" stroke-width="1.5"/><rect x="0" y="4" width="8" height="7" fill="#000"/><rect x="1.5" y="5.35" width="5" height="0.8" fill="#fff"/><rect x="1.5" y="7.15" width="5" height="0.8" fill="#fff"/><rect x="1.5" y="8.95" width="5" height="0.8" fill="#f4f4f4"/><rect x="3.7" y="5" width="0.7" height="5" fill="#000"/></svg>
<div class="t" style="left:80.4px;top:305px;">SPOKEPPL_16</div>
<div style="left:48px;top:328px;width:12px;height:1px;background:#9dbcea;"></div>
<svg style="left:60px;top:320px" width="18" height="16" viewBox="0 0 18 16"><path d="M1.5 4.5 C2.5 2.5 5 1.5 8 1.6 C11 1.6 13.5 3.2 15 5.5 C15.8 7 15.2 9 14 10.5 C13 12 11 12.6 9.5 12.8 C8.5 13.5 7.5 14 6.8 13.6 C5 13.4 3 12.6 2 11.4 C1 10 0.6 8.5 1 7 C0.8 6 1 5.2 1.5 4.5 Z" fill="#fdfdfd" stroke="#d3d8d3" stroke-width="0.9"/><path d="M8.6 1.9 C11.3 2 13.6 3.6 14.8 5.6 C15.6 7 15.2 8.6 14.3 10" fill="none" stroke="#9a9c9a" stroke-width="0.9"/><path d="M1.3 4 L3.2 5.4 L2.2 7.6" fill="none" stroke="#b0b4b0" stroke-width="1.3"/><path d="M9.5 12.8 L12.5 11.8" fill="none" stroke="#a8aca8" stroke-width="0.8"/><path d="M1.75 4.5 V2.6 Q1.75 0.75 4 0.75 Q6.25 0.75 6.25 2.6 V4.5" fill="none" stroke="#000" stroke-width="1.5"/><rect x="0" y="4" width="8" height="7" fill="#000"/><rect x="1.5" y="5.35" width="5" height="0.8" fill="#fff"/><rect x="1.5" y="7.15" width="5" height="0.8" fill="#fff"/><rect x="1.5" y="8.95" width="5" height="0.8" fill="#f4f4f4"/><rect x="3.7" y="5" width="0.7" height="5" fill="#000"/></svg>
<div class="t" style="left:80.4px;top:321px;">SPOKEPPL_17</div>
<div style="left:48px;top:344px;width:12px;height:1px;background:#9dbcea;"></div>
<svg style="left:60px;top:336px" width="18" height="16" viewBox="0 0 18 16"><path d="M1.5 4.5 C2.5 2.5 5 1.5 8 1.6 C11 1.6 13.5 3.2 15 5.5 C15.8 7 15.2 9 14 10.5 C13 12 11 12.6 9.5 12.8 C8.5 13.5 7.5 14 6.8 13.6 C5 13.4 3 12.6 2 11.4 C1 10 0.6 8.5 1 7 C0.8 6 1 5.2 1.5 4.5 Z" fill="#fdfdfd" stroke="#d3d8d3" stroke-width="0.9"/><path d="M8.6 1.9 C11.3 2 13.6 3.6 14.8 5.6 C15.6 7 15.2 8.6 14.3 10" fill="none" stroke="#9a9c9a" stroke-width="0.9"/><path d="M1.3 4 L3.2 5.4 L2.2 7.6" fill="none" stroke="#b0b4b0" stroke-width="1.3"/><path d="M9.5 12.8 L12.5 11.8" fill="none" stroke="#a8aca8" stroke-width="0.8"/><path d="M1.75 4.5 V2.6 Q1.75 0.75 4 0.75 Q6.25 0.75 6.25 2.6 V4.5" fill="none" stroke="#000" stroke-width="1.5"/><rect x="0" y="4" width="8" height="7" fill="#000"/><rect x="1.5" y="5.35" width="5" height="0.8" fill="#fff"/><rect x="1.5" y="7.15" width="5" height="0.8" fill="#fff"/><rect x="1.5" y="8.95" width="5" height="0.8" fill="#f4f4f4"/><rect x="3.7" y="5" width="0.7" height="5" fill="#000"/></svg>
<div class="t" style="left:80.4px;top:337px;">SPOKEPPL_18</div>
<div style="left:48px;top:360px;width:12px;height:1px;background:#9dbcea;"></div>
<svg style="left:60px;top:352px" width="18" height="16" viewBox="0 0 18 16"><path d="M1.5 4.5 C2.5 2.5 5 1.5 8 1.6 C11 1.6 13.5 3.2 15 5.5 C15.8 7 15.2 9 14 10.5 C13 12 11 12.6 9.5 12.8 C8.5 13.5 7.5 14 6.8 13.6 C5 13.4 3 12.6 2 11.4 C1 10 0.6 8.5 1 7 C0.8 6 1 5.2 1.5 4.5 Z" fill="#fdfdfd" stroke="#d3d8d3" stroke-width="0.9"/><path d="M8.6 1.9 C11.3 2 13.6 3.6 14.8 5.6 C15.6 7 15.2 8.6 14.3 10" fill="none" stroke="#9a9c9a" stroke-width="0.9"/><path d="M1.3 4 L3.2 5.4 L2.2 7.6" fill="none" stroke="#b0b4b0" stroke-width="1.3"/><path d="M9.5 12.8 L12.5 11.8" fill="none" stroke="#a8aca8" stroke-width="0.8"/><path d="M1.75 4.5 V2.6 Q1.75 0.75 4 0.75 Q6.25 0.75 6.25 2.6 V4.5" fill="none" stroke="#000" stroke-width="1.5"/><rect x="0" y="4" width="8" height="7" fill="#000"/><rect x="1.5" y="5.35" width="5" height="0.8" fill="#fff"/><rect x="1.5" y="7.15" width="5" height="0.8" fill="#fff"/><rect x="1.5" y="8.95" width="5" height="0.8" fill="#f4f4f4"/><rect x="3.7" y="5" width="0.7" height="5" fill="#000"/></svg>
<div class="t" style="left:80.4px;top:353px;">SPOKEPPL_21</div>
<div style="left:48px;top:376px;width:12px;height:1px;background:#9dbcea;"></div>
<svg style="left:60px;top:368px" width="18" height="16" viewBox="0 0 18 16"><path d="M1.5 4.5 C2.5 2.5 5 1.5 8 1.6 C11 1.6 13.5 3.2 15 5.5 C15.8 7 15.2 9 14 10.5 C13 12 11 12.6 9.5 12.8 C8.5 13.5 7.5 14 6.8 13.6 C5 13.4 3 12.6 2 11.4 C1 10 0.6 8.5 1 7 C0.8 6 1 5.2 1.5 4.5 Z" fill="#fdfdfd" stroke="#d3d8d3" stroke-width="0.9"/><path d="M8.6 1.9 C11.3 2 13.6 3.6 14.8 5.6 C15.6 7 15.2 8.6 14.3 10" fill="none" stroke="#9a9c9a" stroke-width="0.9"/><path d="M1.3 4 L3.2 5.4 L2.2 7.6" fill="none" stroke="#b0b4b0" stroke-width="1.3"/><path d="M9.5 12.8 L12.5 11.8" fill="none" stroke="#a8aca8" stroke-width="0.8"/><path d="M1.75 4.5 V2.6 Q1.75 0.75 4 0.75 Q6.25 0.75 6.25 2.6 V4.5" fill="none" stroke="#000" stroke-width="1.5"/><rect x="0" y="4" width="8" height="7" fill="#000"/><rect x="1.5" y="5.35" width="5" height="0.8" fill="#fff"/><rect x="1.5" y="7.15" width="5" height="0.8" fill="#fff"/><rect x="1.5" y="8.95" width="5" height="0.8" fill="#f4f4f4"/><rect x="3.7" y="5" width="0.7" height="5" fill="#000"/></svg>
<div class="t" style="left:80.4px;top:369px;">SPOKEPPL_22</div>
<div style="left:48px;top:392px;width:12px;height:1px;background:#9dbcea;"></div>
<svg style="left:60px;top:384px" width="18" height="16" viewBox="0 0 18 16"><path d="M1.5 4.5 C2.5 2.5 5 1.5 8 1.6 C11 1.6 13.5 3.2 15 5.5 C15.8 7 15.2 9 14 10.5 C13 12 11 12.6 9.5 12.8 C8.5 13.5 7.5 14 6.8 13.6 C5 13.4 3 12.6 2 11.4 C1 10 0.6 8.5 1 7 C0.8 6 1 5.2 1.5 4.5 Z" fill="#fdfdfd" stroke="#d3d8d3" stroke-width="0.9"/><path d="M8.6 1.9 C11.3 2 13.6 3.6 14.8 5.6 C15.6 7 15.2 8.6 14.3 10" fill="none" stroke="#9a9c9a" stroke-width="0.9"/><path d="M1.3 4 L3.2 5.4 L2.2 7.6" fill="none" stroke="#b0b4b0" stroke-width="1.3"/><path d="M9.5 12.8 L12.5 11.8" fill="none" stroke="#a8aca8" stroke-width="0.8"/><path d="M1.75 4.5 V2.6 Q1.75 0.75 4 0.75 Q6.25 0.75 6.25 2.6 V4.5" fill="none" stroke="#000" stroke-width="1.5"/><rect x="0" y="4" width="8" height="7" fill="#000"/><rect x="1.5" y="5.35" width="5" height="0.8" fill="#fff"/><rect x="1.5" y="7.15" width="5" height="0.8" fill="#fff"/><rect x="1.5" y="8.95" width="5" height="0.8" fill="#f4f4f4"/><rect x="3.7" y="5" width="0.7" height="5" fill="#000"/></svg>
<div class="t" style="left:80.4px;top:385px;">SPOKEPPL_23</div>
<div style="left:48px;top:408px;width:12px;height:1px;background:#9dbcea;"></div>
<svg style="left:60px;top:400px" width="18" height="16" viewBox="0 0 18 16"><path d="M1.5 4.5 C2.5 2.5 5 1.5 8 1.6 C11 1.6 13.5 3.2 15 5.5 C15.8 7 15.2 9 14 10.5 C13 12 11 12.6 9.5 12.8 C8.5 13.5 7.5 14 6.8 13.6 C5 13.4 3 12.6 2 11.4 C1 10 0.6 8.5 1 7 C0.8 6 1 5.2 1.5 4.5 Z" fill="#fdfdfd" stroke="#d3d8d3" stroke-width="0.9"/><path d="M8.6 1.9 C11.3 2 13.6 3.6 14.8 5.6 C15.6 7 15.2 8.6 14.3 10" fill="none" stroke="#9a9c9a" stroke-width="0.9"/><path d="M1.3 4 L3.2 5.4 L2.2 7.6" fill="none" stroke="#b0b4b0" stroke-width="1.3"/><path d="M9.5 12.8 L12.5 11.8" fill="none" stroke="#a8aca8" stroke-width="0.8"/><path d="M1.75 4.5 V2.6 Q1.75 0.75 4 0.75 Q6.25 0.75 6.25 2.6 V4.5" fill="none" stroke="#000" stroke-width="1.5"/><rect x="0" y="4" width="8" height="7" fill="#000"/><rect x="1.5" y="5.35" width="5" height="0.8" fill="#fff"/><rect x="1.5" y="7.15" width="5" height="0.8" fill="#fff"/><rect x="1.5" y="8.95" width="5" height="0.8" fill="#f4f4f4"/><rect x="3.7" y="5" width="0.7" height="5" fill="#000"/></svg>
<div class="t" style="left:80.4px;top:401px;">SPOKEPPL_24</div>
<div style="left:48px;top:424px;width:12px;height:1px;background:#9dbcea;"></div>
<svg style="left:60px;top:416px" width="18" height="16" viewBox="0 0 18 16"><path d="M1.5 4.5 C2.5 2.5 5 1.5 8 1.6 C11 1.6 13.5 3.2 15 5.5 C15.8 7 15.2 9 14 10.5 C13 12 11 12.6 9.5 12.8 C8.5 13.5 7.5 14 6.8 13.6 C5 13.4 3 12.6 2 11.4 C1 10 0.6 8.5 1 7 C0.8 6 1 5.2 1.5 4.5 Z" fill="#fdfdfd" stroke="#d3d8d3" stroke-width="0.9"/><path d="M8.6 1.9 C11.3 2 13.6 3.6 14.8 5.6 C15.6 7 15.2 8.6 14.3 10" fill="none" stroke="#9a9c9a" stroke-width="0.9"/><path d="M1.3 4 L3.2 5.4 L2.2 7.6" fill="none" stroke="#b0b4b0" stroke-width="1.3"/><path d="M9.5 12.8 L12.5 11.8" fill="none" stroke="#a8aca8" stroke-width="0.8"/><path d="M1.75 4.5 V2.6 Q1.75 0.75 4 0.75 Q6.25 0.75 6.25 2.6 V4.5" fill="none" stroke="#000" stroke-width="1.5"/><rect x="0" y="4" width="8" height="7" fill="#000"/><rect x="1.5" y="5.35" width="5" height="0.8" fill="#fff"/><rect x="1.5" y="7.15" width="5" height="0.8" fill="#fff"/><rect x="1.5" y="8.95" width="5" height="0.8" fill="#f4f4f4"/><rect x="3.7" y="5" width="0.7" height="5" fill="#000"/></svg>
<div class="t" style="left:80.4px;top:417px;">SPOKEPPL_25</div>
<div style="left:48px;top:440px;width:12px;height:1px;background:#9dbcea;"></div>
<svg style="left:60px;top:432px" width="18" height="16" viewBox="0 0 18 16"><path d="M1.5 4.5 C2.5 2.5 5 1.5 8 1.6 C11 1.6 13.5 3.2 15 5.5 C15.8 7 15.2 9 14 10.5 C13 12 11 12.6 9.5 12.8 C8.5 13.5 7.5 14 6.8 13.6 C5 13.4 3 12.6 2 11.4 C1 10 0.6 8.5 1 7 C0.8 6 1 5.2 1.5 4.5 Z" fill="#fdfdfd" stroke="#d3d8d3" stroke-width="0.9"/><path d="M8.6 1.9 C11.3 2 13.6 3.6 14.8 5.6 C15.6 7 15.2 8.6 14.3 10" fill="none" stroke="#9a9c9a" stroke-width="0.9"/><path d="M1.3 4 L3.2 5.4 L2.2 7.6" fill="none" stroke="#b0b4b0" stroke-width="1.3"/><path d="M9.5 12.8 L12.5 11.8" fill="none" stroke="#a8aca8" stroke-width="0.8"/><path d="M1.75 4.5 V2.6 Q1.75 0.75 4 0.75 Q6.25 0.75 6.25 2.6 V4.5" fill="none" stroke="#000" stroke-width="1.5"/><rect x="0" y="4" width="8" height="7" fill="#000"/><rect x="1.5" y="5.35" width="5" height="0.8" fill="#fff"/><rect x="1.5" y="7.15" width="5" height="0.8" fill="#fff"/><rect x="1.5" y="8.95" width="5" height="0.8" fill="#f4f4f4"/><rect x="3.7" y="5" width="0.7" height="5" fill="#000"/></svg>
<div class="t" style="left:80.4px;top:433px;">SPOKEPPL_26</div>
</div>
<div style="left:185px;top:35px;width:1px;height:437px;background:#787878;"></div>
<div style="left:186px;top:35px;width:14px;height:437px;background:#f0f0f0;"></div>
<div style="left:186px;top:35px;width:14px;height:15px;background:linear-gradient(90deg,#f4f4f4 0%,#ffffff 35%,#e2e2e2 70%,#cfcfcf 100%);"></div>
<svg style="left:186px;top:35px" width="14" height="15" viewBox="0 0 14 15"><path d="M7.5 4.6 L11.6 9 H3.4 Z" fill="#000"/></svg>
<div style="left:186px;top:457px;width:14px;height:15px;background:linear-gradient(90deg,#f4f4f4 0%,#ffffff 35%,#e2e2e2 70%,#cfcfcf 100%);"></div>
<div style="left:186px;top:456px;width:14px;height:1px;background:#8a8a8a;"></div>
<svg style="left:186px;top:457px" width="14" height="15" viewBox="0 0 14 15"><path d="M3.4 5.6 H11.6 L7.5 10 Z" fill="#000"/></svg>
<div id="thumb" style="left:185px;top:50px;width:15px;height:258px;"></div>
<svg style="left:188px;top:54px" width="10" height="250" shape-rendering="crispEdges"><defs><pattern id="bp2" width="4" height="4" patternUnits="userSpaceOnUse"><rect x="0" y="0" width="1" height="1" fill="#d3dff2"/><rect x="1" y="1" width="1" height="1" fill="#6c8bbf"/><rect x="2" y="2" width="1" height="1" fill="#d3dff2"/><rect x="3" y="3" width="1" height="1" fill="#6c8bbf"/></pattern></defs><rect width="10" height="250" fill="url(#bp2)"/></svg>
<div style="left:186px;top:51px;width:1px;height:256px;background:#c6d6ee;"></div>
<div style="left:186px;top:51px;width:13px;height:1px;background:#c6d6ee;"></div>
<div style="left:211px;top:34px;width:467px;height:16px;background:#404040;"></div>
<div class="t" style="left:383.4px;top:35px;color:#fff;line-height:16px;letter-spacing:-0.16px;">Layer3 VPN - HUB_AO</div>
<div style="left:212px;top:53px;width:99px;height:22px;background:#eeeeee;"></div>
<div style="left:212px;top:53px;width:99px;height:1px;background:#ffffff;"></div>
<div style="left:212px;top:53px;width:1px;height:22px;background:#ffffff;"></div>
<div style="left:311px;top:54px;width:1px;height:20px;background:#6f6f6f;"></div>
<div style="left:214px;top:55px;width:93px;height:16px;border:1px dotted #5b7aa8;"></div>
<div class="t" style="left:224px;top:55px;line-height:17px;letter-spacing:0.12px;">VPN Topology</div>
<div style="left:312px;top:55px;width:66px;height:18px;background:#9e9e9e;"></div>
<div style="left:312px;top:55px;width:66px;height:1px;background:#858585;"></div>
<div style="left:377px;top:55px;width:1px;height:18px;background:#7d7d7d;"></div>
<div style="left:312px;top:56px;width:1px;height:17px;background:#b4b4b4;"></div>
<div class="t" style="left:322.4px;top:57px;line-height:16px;letter-spacing:0.15px;">Detailed</div>
<div style="left:212px;top:74px;width:466px;height:400px;background:#6f6f6f;"></div>
<div style="left:212px;top:74px;width:465px;height:399px;background:#f4f4f4;"></div>
<div style="left:213px;top:75px;width:464px;height:398px;background:#ffffff;"></div>
<div style="left:212px;top:74px;width:99px;height:1px;background:#eeeeee;"></div>
<svg style="left:213px;top:75px" width="464" height="398" viewBox="213 75 464 398">
<g stroke="#000" stroke-width="1.05" stroke-linecap="butt">
<line x1="383.1" y1="145.7" x2="525.5" y2="204.1"/>
<line x1="383.1" y1="145.7" x2="543.3" y2="273.2"/>
<line x1="383.1" y1="145.7" x2="525.6" y2="342.2"/>
<line x1="383.1" y1="145.7" x2="474.6" y2="393.3"/>
<line x1="368.2" y1="149.9" x2="525.5" y2="204.1"/>
<line x1="368.2" y1="149.9" x2="543.3" y2="273.2"/>
<line x1="368.2" y1="149.9" x2="525.6" y2="342.2"/>
<line x1="368.2" y1="149.9" x2="474.6" y2="393.3"/>
<line x1="353.8" y1="155.9" x2="525.5" y2="204.1"/>
<line x1="353.8" y1="155.9" x2="543.3" y2="273.2"/>
<line x1="353.8" y1="155.9" x2="525.6" y2="342.2"/>
<line x1="353.8" y1="155.9" x2="474.6" y2="393.3"/>
<line x1="340.2" y1="163.4" x2="525.5" y2="204.1"/>
<line x1="340.2" y1="163.4" x2="543.3" y2="273.2"/>
<line x1="340.2" y1="163.4" x2="525.6" y2="342.2"/>
<line x1="340.2" y1="163.4" x2="474.6" y2="393.3"/>
<line x1="327.6" y1="172.4" x2="525.5" y2="204.1"/>
<line x1="327.6" y1="172.4" x2="543.3" y2="273.2"/>
<line x1="327.6" y1="172.4" x2="525.6" y2="342.2"/>
<line x1="327.6" y1="172.4" x2="474.6" y2="393.3"/>
<line x1="316.0" y1="182.7" x2="525.5" y2="204.1"/>
<line x1="316.0" y1="182.7" x2="543.3" y2="273.2"/>
<line x1="316.0" y1="182.7" x2="525.6" y2="342.2"/>
<line x1="316.0" y1="182.7" x2="474.6" y2="393.3"/>
<line x1="305.7" y1="194.3" x2="525.5" y2="204.1"/>
<line x1="305.7" y1="194.3" x2="543.3" y2="273.2"/>
<line x1="305.7" y1="194.3" x2="525.6" y2="342.2"/>
<line x1="305.7" y1="194.3" x2="474.6" y2="393.3"/>
<line x1="296.7" y1="206.9" x2="525.5" y2="204.1"/>
<line x1="296.7" y1="206.9" x2="543.3" y2="273.2"/>
<line x1="296.7" y1="206.9" x2="525.6" y2="342.2"/>
<line x1="296.7" y1="206.9" x2="474.6" y2="393.3"/>
<line x1="289.2" y1="220.5" x2="525.5" y2="204.1"/>
<line x1="289.2" y1="220.5" x2="543.3" y2="273.2"/>
<line x1="289.2" y1="220.5" x2="525.6" y2="342.2"/>
<line x1="289.2" y1="220.5" x2="474.6" y2="393.3"/>
<line x1="283.3" y1="234.8" x2="525.5" y2="204.1"/>
<line x1="283.3" y1="234.8" x2="543.3" y2="273.2"/>
<line x1="283.3" y1="234.8" x2="525.6" y2="342.2"/>
<line x1="283.3" y1="234.8" x2="474.6" y2="393.3"/>
<line x1="279.0" y1="249.7" x2="525.5" y2="204.1"/>
<line x1="279.0" y1="249.7" x2="543.3" y2="273.2"/>
<line x1="279.0" y1="249.7" x2="525.6" y2="342.2"/>
<line x1="279.0" y1="249.7" x2="474.6" y2="393.3"/>
<line x1="276.4" y1="265.0" x2="525.5" y2="204.1"/>
<line x1="276.4" y1="265.0" x2="543.3" y2="273.2"/>
<line x1="276.4" y1="265.0" x2="525.6" y2="342.2"/>
<line x1="276.4" y1="265.0" x2="474.6" y2="393.3"/>
<line x1="275.5" y1="280.5" x2="525.5" y2="204.1"/>
<line x1="275.5" y1="280.5" x2="543.3" y2="273.2"/>
<line x1="275.5" y1="280.5" x2="525.6" y2="342.2"/>
<line x1="275.5" y1="280.5" x2="474.6" y2="393.3"/>
<line x1="276.4" y1="296.0" x2="525.5" y2="204.1"/>
<line x1="276.4" y1="296.0" x2="543.3" y2="273.2"/>
<line x1="276.4" y1="296.0" x2="525.6" y2="342.2"/>
<line x1="276.4" y1="296.0" x2="474.6" y2="393.3"/>
<line x1="279.0" y1="311.3" x2="525.5" y2="204.1"/>
<line x1="279.0" y1="311.3" x2="543.3" y2="273.2"/>
<line x1="279.0" y1="311.3" x2="525.6" y2="342.2"/>
<line x1="279.0" y1="311.3" x2="474.6" y2="393.3"/>
<line x1="283.3" y1="326.2" x2="525.5" y2="204.1"/>
<line x1="283.3" y1="326.2" x2="543.3" y2="273.2"/>
<line x1="283.3" y1="326.2" x2="525.6" y2="342.2"/>
<line x1="283.3" y1="326.2" x2="474.6" y2="393.3"/>
<line x1="289.2" y1="340.5" x2="525.5" y2="204.1"/>
<line x1="289.2" y1="340.5" x2="543.3" y2="273.2"/>
<line x1="289.2" y1="340.5" x2="525.6" y2="342.2"/>
<line x1="289.2" y1="340.5" x2="474.6" y2="393.3"/>
<line x1="296.7" y1="354.1" x2="525.5" y2="204.1"/>
<line x1="296.7" y1="354.1" x2="543.3" y2="273.2"/>
<line x1="296.7" y1="354.1" x2="525.6" y2="342.2"/>
<line x1="296.7" y1="354.1" x2="474.6" y2="393.3"/>
<line x1="305.7" y1="366.7" x2="525.5" y2="204.1"/>
<line x1="305.7" y1="366.7" x2="543.3" y2="273.2"/>
<line x1="305.7" y1="366.7" x2="525.6" y2="342.2"/>
<line x1="305.7" y1="366.7" x2="474.6" y2="393.3"/>
<line x1="316.0" y1="378.3" x2="525.5" y2="204.1"/>
<line x1="316.0" y1="378.3" x2="543.3" y2="273.2"/>
<line x1="316.0" y1="378.3" x2="525.6" y2="342.2"/>
<line x1="316.0" y1="378.3" x2="474.6" y2="393.3"/>
<line x1="327.6" y1="388.6" x2="525.5" y2="204.1"/>
<line x1="327.6" y1="388.6" x2="543.3" y2="273.2"/>
<line x1="327.6" y1="388.6" x2="525.6" y2="342.2"/>
<line x1="327.6" y1="388.6" x2="474.6" y2="393.3"/>
<line x1="340.2" y1="397.6" x2="525.5" y2="204.1"/>
<line x1="340.2" y1="397.6" x2="543.3" y2="273.2"/>
<line x1="340.2" y1="397.6" x2="525.6" y2="342.2"/>
<line x1="340.2" y1="397.6" x2="474.6" y2="393.3"/>
<line x1="353.8" y1="405.1" x2="525.5" y2="204.1"/>
<line x1="353.8" y1="405.1" x2="543.3" y2="273.2"/>
<line x1="353.8" y1="405.1" x2="525.6" y2="342.2"/>
<line x1="353.8" y1="405.1" x2="474.6" y2="393.3"/>
<line x1="368.2" y1="411.1" x2="525.5" y2="204.1"/>
<line x1="368.2" y1="411.1" x2="543.3" y2="273.2"/>
<line x1="368.2" y1="411.1" x2="525.6" y2="342.2"/>
<line x1="368.2" y1="411.1" x2="474.6" y2="393.3"/>
<line x1="383.1" y1="415.3" x2="525.5" y2="204.1"/>
<line x1="383.1" y1="415.3" x2="543.3" y2="273.2"/>
<line x1="383.1" y1="415.3" x2="525.6" y2="342.2"/>
<line x1="383.1" y1="415.3" x2="474.6" y2="393.3"/>
<line x1="398.4" y1="417.9" x2="525.5" y2="204.1"/>
<line x1="398.4" y1="417.9" x2="543.3" y2="273.2"/>
<line x1="398.4" y1="417.9" x2="525.6" y2="342.2"/>
<line x1="398.4" y1="417.9" x2="474.6" y2="393.3"/>
</g>
<g fill="#f6c400">
<circle cx="382.6" cy="145.2" r="5"/>
<circle cx="367.7" cy="149.4" r="5"/>
<circle cx="353.3" cy="155.4" r="5"/>
<circle cx="339.7" cy="162.9" r="5"/>
<circle cx="327.1" cy="171.9" r="5"/>
<circle cx="315.5" cy="182.2" r="5"/>
<circle cx="305.2" cy="193.8" r="5"/>
<circle cx="296.2" cy="206.4" r="5"/>
<circle cx="288.7" cy="220.0" r="5"/>
<circle cx="282.8" cy="234.3" r="5"/>
<circle cx="278.5" cy="249.2" r="5"/>
<circle cx="275.9" cy="264.5" r="5"/>
<circle cx="275.0" cy="280.0" r="5"/>
<circle cx="275.9" cy="295.5" r="5"/>
<circle cx="278.5" cy="310.8" r="5"/>
<circle cx="282.8" cy="325.7" r="5"/>
<circle cx="288.7" cy="340.0" r="5"/>
<circle cx="296.2" cy="353.6" r="5"/>
<circle cx="305.2" cy="366.2" r="5"/>
<circle cx="315.5" cy="377.8" r="5"/>
<circle cx="327.1" cy="388.1" r="5"/>
<circle cx="339.7" cy="397.1" r="5"/>
<circle cx="353.3" cy="404.6" r="5"/>
<circle cx="367.7" cy="410.6" r="5"/>
<circle cx="382.6" cy="414.8" r="5"/>
<circle cx="397.9" cy="417.4" r="5"/>
</g>
<rect x="240" y="158" width="90.2" height="12" fill="#fff"/><rect x="220" y="158" width="104.9" height="19" fill="#fff"/>
<defs>
<linearGradient id="rb" x1="0" y1="0" x2="1" y2="0"><stop offset="0" stop-color="#0a5566"/><stop offset="0.4" stop-color="#2f99a8"/><stop offset="0.6" stop-color="#258c9c"/><stop offset="1" stop-color="#063f52"/></linearGradient>
<linearGradient id="rt" x1="0" y1="0" x2="1" y2="0"><stop offset="0" stop-color="#1c8a9a"/><stop offset="0.5" stop-color="#27a0ae"/><stop offset="1" stop-color="#117286"/></linearGradient>
<radialGradient id="rh" cx="0.45" cy="1" r="0.6"><stop offset="0" stop-color="#a8dde0" stop-opacity="0.9"/><stop offset="1" stop-color="#a8dde0" stop-opacity="0"/></radialGradient>
</defs>
<g transform="translate(517.0,194.8)"><path d="M0 3.7 V7.3 C0 9.4 3.6 11.1 8 11.1 C12.4 11.1 16 9.4 16 7.3 V3.7 Z" fill="url(#rb)"/><path d="M0 3.7 V7.3 C0 9.4 3.6 11.1 8 11.1 C12.4 11.1 16 9.4 16 7.3 V3.7 Z" fill="url(#rh)"/><ellipse cx="8" cy="3.7" rx="8" ry="3.7" fill="url(#rt)"/><g stroke="#f4ffff" stroke-width="1" fill="none" stroke-linecap="round"><path d="M1.6 2.4 L6.4 3.2"/><path d="M9.8 3.9 L14.2 5"/><path d="M10.8 1 L8.8 2.8"/><path d="M7 4 L4.6 6"/></g></g>
<g transform="translate(534.8,263.9)"><path d="M0 3.7 V7.3 C0 9.4 3.6 11.1 8 11.1 C12.4 11.1 16 9.4 16 7.3 V3.7 Z" fill="url(#rb)"/><path d="M0 3.7 V7.3 C0 9.4 3.6 11.1 8 11.1 C12.4 11.1 16 9.4 16 7.3 V3.7 Z" fill="url(#rh)"/><ellipse cx="8" cy="3.7" rx="8" ry="3.7" fill="url(#rt)"/><g stroke="#f4ffff" stroke-width="1" fill="none" stroke-linecap="round"><path d="M1.6 2.4 L6.4 3.2"/><path d="M9.8 3.9 L14.2 5"/><path d="M10.8 1 L8.8 2.8"/><path d="M7 4 L4.6 6"/></g></g>
<g transform="translate(517.1,332.9)"><path d="M0 3.7 V7.3 C0 9.4 3.6 11.1 8 11.1 C12.4 11.1 16 9.4 16 7.3 V3.7 Z" fill="url(#rb)"/><path d="M0 3.7 V7.3 C0 9.4 3.6 11.1 8 11.1 C12.4 11.1 16 9.4 16 7.3 V3.7 Z" fill="url(#rh)"/><ellipse cx="8" cy="3.7" rx="8" ry="3.7" fill="url(#rt)"/><g stroke="#f4ffff" stroke-width="1" fill="none" stroke-linecap="round"><path d="M1.6 2.4 L6.4 3.2"/><path d="M9.8 3.9 L14.2 5"/><path d="M10.8 1 L8.8 2.8"/><path d="M7 4 L4.6 6"/></g></g>
<g transform="translate(466.1,384.0)"><path d="M0 3.7 V7.3 C0 9.4 3.6 11.1 8 11.1 C12.4 11.1 16 9.4 16 7.3 V3.7 Z" fill="url(#rb)"/><path d="M0 3.7 V7.3 C0 9.4 3.6 11.1 8 11.1 C12.4 11.1 16 9.4 16 7.3 V3.7 Z" fill="url(#rh)"/><ellipse cx="8" cy="3.7" rx="8" ry="3.7" fill="url(#rt)"/><g stroke="#f4ffff" stroke-width="1" fill="none" stroke-linecap="round"><path d="M1.6 2.4 L6.4 3.2"/><path d="M9.8 3.9 L14.2 5"/><path d="M10.8 1 L8.8 2.8"/><path d="M7 4 L4.6 6"/></g></g>
</svg>
<div class="t" style="left:510.5px;top:206.8px;color:#111;">P33</div>
<div class="t" style="left:531.7px;top:275.9px;color:#111;">P2</div>
<div class="t" style="left:510.6px;top:344.9px;color:#111;">P22</div>
<div class="t" style="left:463.0px;top:396.0px;color:#111;">P1</div>
<div class="t b" style="left:222px;top:79.0px;color:#2b2b98;">Exports:</div>
<div class="t b" style="left:244px;top:92.8px;color:#2b2b98;letter-spacing:0.2px;">65101:65001</div>
<div class="t b" style="left:244px;top:110.0px;color:#2b2b98;letter-spacing:0.2px;">65101:65000</div>
<div class="t b" style="left:222px;top:126.8px;color:#2b2b98;">Imports:</div>
<div class="t b" style="left:246px;top:143.8px;color:#2b2b98;letter-spacing:0.2px;">65101:65001</div>
<div class="t b" style="left:246px;top:158.8px;color:#2b2b98;letter-spacing:0.2px;">65101:65008</div>
<div class="t b" style="left:601.6px;top:79.2px;color:#2b2b98;letter-spacing:-0.3px;">No. PEs = 4</div>
<div class="t b" style="left:499.3px;top:95.2px;width:166px;text-align:right;color:#2b2b98;text-decoration:underline;">To VPN View</div>
<div class="btn" style="left:141px;top:481px;width:81px;height:23px;color:#9a9a9a;"><span>Highlight</span></div>
<div class="btn" style="left:227px;top:481px;width:97px;height:23px;color:#111;"><span>Highlight All</span></div>
<div class="btn" style="left:330px;top:481px;width:83px;height:23px;color:#111;"><span>Actions</span><svg width="5" height="7" viewBox="0 0 5 7" style="position:static;margin-left:7px;vertical-align:0px;"><path d="M0.5 0.5 L4 3.5 L0.5 6.5 Z" fill="#111"/></svg></div>
<div class="btn" style="left:547px;top:481px;width:64px;height:23px;color:#111;"><span>Close</span></div>
<div class="btn" style="left:617px;top:481px;width:57px;height:23px;color:#111;"><span>Help</span></div>
</body></html>
